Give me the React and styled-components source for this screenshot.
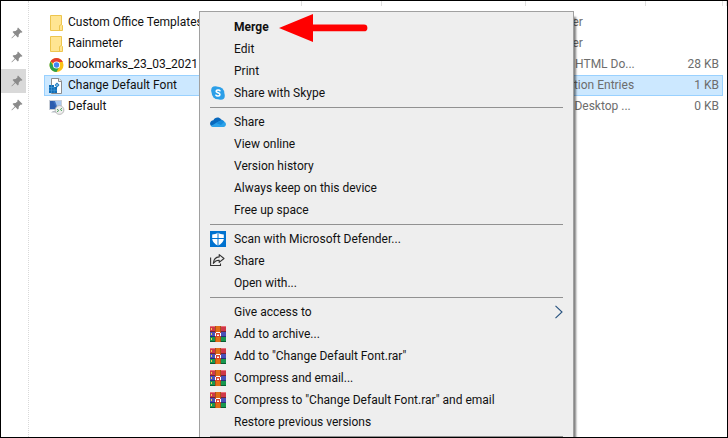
import React from "react";
import styled, { createGlobalStyle } from "styled-components";

const GlobalStyle = createGlobalStyle`
  * { box-sizing: border-box; }
  body {
    margin: 0;
    background: #fff;
    font-family: Roboto, "Open Sans", sans-serif;
    font-size: 12px;
    color: #111;
  }
  button { font: inherit; color: inherit; }
`;

const Window = styled.div`
  position: relative;
  display: flex;
  min-height: 100vh;
  border: 1px solid #000;
  background: #fff;
  overflow: hidden;
`;

const QuickAccess = styled.nav`
  flex: none;
  width: 28px;
  padding: 20px 2px 0 0;
  border-right: 1px dotted #d9d9d9;
`;

const PinButton = styled.button`
  display: flex;
  align-items: center;
  justify-content: flex-end;
  width: 100%;
  height: 24px;
  padding: 0 3px 0 0;
  border: 0;
  background: ${(p) => (p.$current ? "#d9d9d9" : "transparent")};
`;

const FilePane = styled.main`
  flex: 1;
  min-width: 0;
  padding: 0 0 0 15px;
`;

const FileTable = styled.table`
  width: 100%;
  table-layout: fixed;
  border-collapse: separate;
  border-spacing: 0;
`;

const Column = styled.col`
  width: ${(p) => p.$width};
`;

const HeadCell = styled.th`
  height: 11px;
  padding: 0;
  background: linear-gradient(#dedede, #dedede) right top / 1px 5px no-repeat;
`;

const FileRow = styled.tr`
  height: 21px;
  --edge: ${(p) => (p.$selected ? "#99d1ff" : "transparent")};
  --fill: ${(p) => (p.$selected ? "#cce8ff" : "transparent")};
`;

const Cell = styled.td`
  height: 21px;
  padding: 0 4px;
  line-height: 19px;
  color: #6d6d6d;
  text-align: ${(p) => p.$align || "left"};
  white-space: nowrap;
  background: var(--fill);
  border: solid var(--edge);
  border-width: 1px 0;
  &:first-child { border-left-width: 1px; color: #111; }
  &:nth-child(5) { border-right-width: 1px; padding-right: 3px; }
`;

const EdgeCell = styled.td`
  padding: 0;
`;

const FileName = styled.div`
  display: flex;
  align-items: center;
  gap: 3px;
  height: 19px;
`;

const Menu = styled.div`
  position: absolute;
  top: 10px;
  left: 198px;
  width: 375px;
  padding: 4px 10px;
  border: 1px solid #a0a0a0;
  background: #eee;
  box-shadow: 3px 5px 2px -1px rgba(0, 0, 0, 0.5);
`;

const MenuItem = styled.button`
  display: flex;
  align-items: center;
  gap: 8px;
  width: 100%;
  height: 22px;
  padding: 0;
  border: 0;
  background: transparent;
  text-align: left;
  white-space: nowrap;
  font-weight: ${(p) => (p.$default ? 700 : 400)};
`;

const IconSlot = styled.span`
  display: flex;
  flex: none;
  width: 16px;
  height: 16px;
`;

const ItemLabel = styled.span`
  flex: 1;
`;

const Separator = styled.hr`
  height: 1px;
  margin: 3px 0;
  border: 0;
  background: #919191;
`;

const Pointer = styled.svg`
  position: absolute;
  top: 13px;
  left: 278px;
`;

const Icon = ({ children, size = 16 }) => (
  <svg width={size} height={size} viewBox="0 0 16 16" aria-hidden="true">{children}</svg>
);

const PinIcon = () => (
  <svg width="12" height="12" viewBox="0 0 12 12" aria-hidden="true">
    <path d="M7 0.5 11.5 5 10.4 5.7 9.7 5.5 7.8 7.5 7.6 9.8 6.8 10.4 4.4 8 1 11.3 0.5 11.2 0.6 10.7 3.8 7.4 1.6 5 2.3 4.2 4.6 4.1 6.6 2.2 6.3 1.4Z" fill="#8b8b8b" />
  </svg>
);

const FolderIcon = () => (
  <Icon>
    <path d="M1.5 0.5H12.5V9.5L13.5 10.5V15.5H1.5Z" fill="#ffe592" stroke="#edc54e" />
    <path d="M10.5 15V10.5L12.5 9.5" fill="none" stroke="#edc54e" />
  </Icon>
);

const ChromeIcon = () => (
  <Icon>
    <circle cx="7.5" cy="8" r="7" fill="#fbc116" />
    <path d="M7.5 8 1.44 4.5A7 7 0 0 1 13.56 4.5L13.8 5H7.5Z" fill="#e33b2e" />
    <path d="M1.44 4.5A7 7 0 0 0 7.5 15L10.5 9.5 7.5 8 4.5 9Z" fill="#2ba24c" />
    <circle cx="7.5" cy="8" r="3.6" fill="#fff" />
    <circle cx="7.5" cy="8" r="2.7" fill="#4285f4" />
  </Icon>
);

const RegistryIcon = () => (
  <Icon>
    <path d="M2.5 0.5H10L12.5 3V15.5H2.5Z" fill="#fff" stroke="#8c8c8c" />
    <path d="M9.5 0.5V3.5H12.5" fill="#eee" stroke="#8c8c8c" />
    <path d="M8 4.6 10.5 7 8 9.4 5.6 7Z" fill="#1e78bd" />
    <path d="M6.7 5.8 9.2 8.3M9.2 5.8 6.7 8.3" stroke="#a5d8f5" strokeWidth="0.6" />
    <path d="M0 7H5V9H8V15H0Z" fill="#0f6db8" />
    <path d="M2.5 7V15M5.2 9V15M0 9.5H5M0 12.2H8" stroke="#4f9fd6" strokeWidth="0.6" />
  </Icon>
);

const RemoteIcon = () => (
  <Icon>
    <rect x="0.5" y="1.5" width="12" height="9" fill="#a9c8ee" stroke="#c7cdd6" />
    <path d="M1 2H6L9 10H1Z" fill="#3c6fc0" />
    <path d="M1 2H4L8 10H1Z" fill="#2c5cad" />
    <path d="M2 13.5H8V12H4Z" fill="#b8bec6" />
    <circle cx="10.5" cy="11" r="4.4" fill="#eee" stroke="#aaa" strokeWidth="0.8" />
    <path d="M8 10.2 9.8 11.5 8 12.8M13 9.2 11.3 10.5 13 11.8" fill="none" stroke="#56a862" />
  </Icon>
);

const SkypeIcon = () => (
  <Icon>
    <circle cx="8" cy="8" r="6.3" fill="#2c9fe8" />
    <circle cx="5.2" cy="5.2" r="4" fill="#2c9fe8" />
    <circle cx="10.8" cy="10.8" r="4" fill="#2c9fe8" />
    <path d="M10 5.8C9.4 4.7 6.2 4.6 6.1 6.3 6.1 8.1 10.1 7.5 10 9.6 9.9 11.4 6.5 11.3 5.9 10.1" fill="none" stroke="#fff" strokeWidth="1.5" strokeLinecap="round" />
  </Icon>
);

const OneDriveIcon = () => (
  <Icon>
    <path d="M0 10C0 7.7 1.6 6.4 3.4 6.2 4.6 3.3 8.9 2.5 11 5.3L13.3 7 8 10 1 12Z" fill="#0768bd" />
    <path d="M1 12 6 9 8.3 7.8 11 6.6C13 6 14 7 14.3 7.7 16.7 8.5 16.5 13 13.5 13H3.3C2.2 13 1.4 12.6 1 12Z" fill="#2ca2e9" />
    <path d="M6 9 11 6.6C12.5 6.2 13.7 6.9 14.3 7.7L11 11Z" fill="#168bdc" />
  </Icon>
);

const DefenderIcon = () => (
  <Icon>
    <rect width="16" height="16" fill="#0072cf" />
    <path d="M8 1.4C9.7 2.8 11.7 3.3 13.8 3.4V7.6C13.7 10.8 11 13.3 8 14.8 5 13.3 2.3 10.8 2.2 7.6V3.4C4.3 3.3 6.3 2.8 8 1.4Z" fill="#fff" />
    <path d="M8 1V15M2 7.5H14" stroke="#0072cf" />
  </Icon>
);

const ShareIcon = () => (
  <Icon>
    <path d="M0.6 4.5V12.5H10.5V10.5" fill="none" stroke="#333" strokeWidth="1.1" />
    <path d="M9.2 1.6 14 5.5 9.2 9.4V7.2C6.7 7 5 8 3.3 10.4 3.6 6.8 5.6 4.2 9.2 3.9Z" fill="none" stroke="#333" strokeWidth="1.1" strokeLinejoin="round" />
  </Icon>
);

const ArchiveIcon = () => (
  <Icon>
    <rect width="16" height="5" fill="#cf3848" />
    <rect width="16" height="1" fill="#ec7078" />
    <rect y="5" width="16" height="1" fill="#742335" />
    <rect y="6" width="16" height="4" fill="#4a50b8" />
    <rect y="10" width="16" height="1" fill="#263077" />
    <rect y="11" width="16" height="4" fill="#18964f" />
    <rect y="15" width="16" height="1" fill="#075c30" />
    <path d="M1.5 2V4M1.5 7V9M1.5 12V14" stroke="#f1cf50" />
    <rect x="5" width="6" height="16" fill="#a94f19" />
    <rect x="6" width="4" height="16" fill="#e26d16" />
    <path d="M5 6H11V11H5Z" fill="#d8402c" />
    <path d="M5.5 10V7M10.5 10V7M6 6.5H10M7.5 8.5V10M8.5 8.5V10" stroke="#fff" />
  </Icon>
);

const Chevron = () => (
  <svg width="8" height="14" viewBox="0 0 8 14" aria-hidden="true">
    <path d="M0.5 0.8 7 7 0.5 13.2" fill="none" stroke="#27527f" strokeWidth="1.1" />
  </svg>
);

const files = [
  { name: "Custom Office Templates", icon: FolderIcon, type: "File folder", size: "" },
  { name: "Rainmeter", icon: FolderIcon, type: "File folder", size: "" },
  { name: "bookmarks_23_03_2021", icon: ChromeIcon, type: "Chrome HTML Do...", size: "28 KB" },
  { name: "Change Default Font", icon: RegistryIcon, type: "Registration Entries", size: "1 KB", selected: true },
  { name: "Default", icon: RemoteIcon, type: "Remote Desktop ...", size: "0 KB" },
];

const groups = [
  [
    { label: "Merge", main: true },
    { label: "Edit" },
    { label: "Print" },
    { label: "Share with Skype", icon: SkypeIcon },
  ],
  [
    { label: "Share", icon: OneDriveIcon },
    { label: "View online" },
    { label: "Version history" },
    { label: "Always keep on this device" },
    { label: "Free up space" },
  ],
  [
    { label: "Scan with Microsoft Defender...", icon: DefenderIcon },
    { label: "Share", icon: ShareIcon },
    { label: "Open with..." },
  ],
  [
    { label: "Give access to", submenu: true },
    { label: "Add to archive...", icon: ArchiveIcon },
    { label: 'Add to "Change Default Font.rar"', icon: ArchiveIcon },
    { label: "Compress and email...", icon: ArchiveIcon },
    { label: 'Compress to "Change Default Font.rar" and email', icon: ArchiveIcon },
    { label: "Restore previous versions" },
  ],
];

const columns = ["auto", "80px", "144px", "120px", "77px", "4px"];

export default function App() {
  return (
    <>
      <GlobalStyle />
      <Window>
        <QuickAccess aria-label="Quick access">
          {[0, 1, 2, 3].map((i) => (
            <PinButton key={i} $current={i === 2} aria-label={`Pinned folder ${i + 1}`}>
              <PinIcon />
            </PinButton>
          ))}
        </QuickAccess>
        <FilePane>
          <FileTable>
            <colgroup>{columns.map((w, i) => <Column key={i} $width={w} />)}</colgroup>
            <thead>
              <tr>{columns.map((w, i) => <HeadCell key={i} />)}</tr>
            </thead>
            <tbody>
              {files.map(({ name, icon: FileIcon, type, size, selected }) => (
                <FileRow key={name} $selected={selected}>
                  <Cell><FileName><FileIcon />{name}</FileName></Cell>
                  <Cell />
                  <Cell />
                  <Cell>{type}</Cell>
                  <Cell $align="right">{size}</Cell>
                  <EdgeCell />
                </FileRow>
              ))}
            </tbody>
          </FileTable>
        </FilePane>
        <Menu role="menu">
          {groups.map((items, g) => (
            <React.Fragment key={g}>
              {items.map(({ label, icon: ItemIcon, main, submenu }) => (
                <MenuItem key={label} role="menuitem" $default={main}>
                  <IconSlot>{ItemIcon && <ItemIcon />}</IconSlot>
                  <ItemLabel>{label}</ItemLabel>
                  {submenu && <Chevron />}
                </MenuItem>
              ))}
              <Separator />
            </React.Fragment>
          ))}
        </Menu>
        <Pointer width="92" height="30" viewBox="0 0 92 30" aria-hidden="true">
          <path d="M0 14 34 0V10.5H85A3.4 3.4 0 0 1 85 17.3H34V28Z" fill="#f00" />
        </Pointer>
      </Window>
    </>
  );
}
